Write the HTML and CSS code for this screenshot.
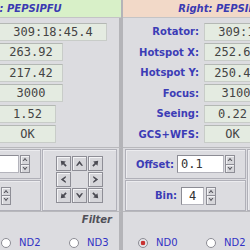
FILE: index.html
```html
<!DOCTYPE html>
<html lang="en">
<head>
    <meta charset="UTF-8">
    <meta name="viewport" content="width=device-width, initial-scale=1.0">
    <title>PEPSIPFU Guider</title>
    <link rel="stylesheet" href="styles.css">
</head>
<body>
    <svg class="defs" width="0" height="0" aria-hidden="true">
        <symbol id="chev" viewBox="0 0 10 10"><path d="M5 2L9 7.5H7L5 5L3 7.5H1Z"/></symbol>
        <symbol id="diag" viewBox="0 0 10 10"><path d="M2 2L7.6 2.8L5.9 4.5L8.6 7.2L7.2 8.6L4.5 5.9L2.8 7.6Z"/></symbol>
        <symbol id="tri" viewBox="0 0 8 6"><path d="M4 0.8L7.2 5H5.6L4 2.9L2.4 5H0.8Z"/></symbol>
    </svg>

    <div class="app">
        <!-- left guider -->
        <section class="panel">
            <h2 class="title green">Left: PEPSIPFU</h2>
            <div class="body">
                <div class="fields">
                    <span class="lbl">Rotator:</span><span class="val w-long">309:18:45.4</span>
                    <span class="lbl">Hotspot X:</span><span class="val w-mid">263.92</span>
                    <span class="lbl">Hotspot Y:</span><span class="val w-mid">217.42</span>
                    <span class="lbl">Focus:</span><span class="val w-mid">3000</span>
                    <span class="lbl">Seeing:</span><span class="val w-short">1.52</span>
                    <span class="lbl">GCS+WFS:</span><span class="val w-short">OK</span>
                </div>
                <div class="controls">
                    <div class="stack">
                        <div class="frame">
                            <div class="spin">
                                <span class="lbl">Offset:</span>
                                <span class="entry offset">0.1</span>
                                <span class="spin-btns">
                                    <span class="sb"><svg><use href="#tri"/></svg></span>
                                    <span class="sb down"><svg><use href="#tri"/></svg></span>
                                </span>
                            </div>
                        </div>
                        <div class="frame">
                            <div class="spin bin">
                                <span class="lbl">Bin:</span>
                                <span class="entry small">4</span>
                                <span class="spin-btns">
                                    <span class="sb"><svg><use href="#tri"/></svg></span>
                                    <span class="sb down"><svg><use href="#tri"/></svg></span>
                                </span>
                            </div>
                        </div>
                    </div>
                    <div class="frame pad-frame">
                        <div class="pad">
                            <span class="pbtn"><svg><use href="#diag"/></svg></span>
                            <span class="pbtn"><svg><use href="#chev"/></svg></span>
                            <span class="pbtn r90"><svg><use href="#diag"/></svg></span>
                            <span class="pbtn r270"><svg><use href="#chev"/></svg></span>
                            <span class="pad-gap"></span>
                            <span class="pbtn r90"><svg><use href="#chev"/></svg></span>
                            <span class="pbtn r270"><svg><use href="#diag"/></svg></span>
                            <span class="pbtn r180"><svg><use href="#chev"/></svg></span>
                            <span class="pbtn r180"><svg><use href="#diag"/></svg></span>
                        </div>
                    </div>
                </div>
                <div class="filter">
                    <div class="filter-title">Filter</div>
                    <div class="radios">
                        <label class="radio"><span class="dot"></span>ND0</label>
                        <label class="radio"><span class="dot"></span>ND2</label>
                        <label class="radio"><span class="dot"></span>ND3</label>
                    </div>
                </div>
            </div>
        </section>

        <div class="divider"></div>

        <!-- right guider -->
        <section class="panel">
            <h2 class="title peach">Right: PEPSIPFU</h2>
            <div class="body">
                <div class="fields">
                    <span class="lbl">Rotator:</span><span class="val w-long">309:18:45.4</span>
                    <span class="lbl">Hotspot X:</span><span class="val w-mid">252.63</span>
                    <span class="lbl">Hotspot Y:</span><span class="val w-mid">250.41</span>
                    <span class="lbl">Focus:</span><span class="val w-mid">3100</span>
                    <span class="lbl">Seeing:</span><span class="val w-short">0.22</span>
                    <span class="lbl">GCS+WFS:</span><span class="val w-short">OK</span>
                </div>
                <div class="controls">
                    <div class="stack">
                        <div class="frame">
                            <div class="spin">
                                <span class="lbl">Offset:</span>
                                <span class="entry offset">0.1</span>
                                <span class="spin-btns">
                                    <span class="sb"><svg><use href="#tri"/></svg></span>
                                    <span class="sb down"><svg><use href="#tri"/></svg></span>
                                </span>
                            </div>
                        </div>
                        <div class="frame">
                            <div class="spin bin">
                                <span class="lbl">Bin:</span>
                                <span class="entry small">4</span>
                                <span class="spin-btns">
                                    <span class="sb"><svg><use href="#tri"/></svg></span>
                                    <span class="sb down"><svg><use href="#tri"/></svg></span>
                                </span>
                            </div>
                        </div>
                    </div>
                    <div class="frame pad-frame">
                        <div class="pad">
                            <span class="pbtn"><svg><use href="#diag"/></svg></span>
                            <span class="pbtn"><svg><use href="#chev"/></svg></span>
                            <span class="pbtn r90"><svg><use href="#diag"/></svg></span>
                            <span class="pbtn r270"><svg><use href="#chev"/></svg></span>
                            <span class="pad-gap"></span>
                            <span class="pbtn r90"><svg><use href="#chev"/></svg></span>
                            <span class="pbtn r270"><svg><use href="#diag"/></svg></span>
                            <span class="pbtn r180"><svg><use href="#chev"/></svg></span>
                            <span class="pbtn r180"><svg><use href="#diag"/></svg></span>
                        </div>
                    </div>
                </div>
                <div class="filter">
                    <div class="filter-title">Filter</div>
                    <div class="radios">
                        <label class="radio"><span class="dot on"></span>ND0</label>
                        <label class="radio"><span class="dot"></span>ND2</label>
                        <label class="radio"><span class="dot"></span>ND3</label>
                    </div>
                </div>
            </div>
        </section>
    </div>
</body>
</html>
```

FILE: styles.css
```css
* { box-sizing: border-box; }
body { margin: 0; width: 250px; height: 250px; overflow: hidden; background: #dcdce0; font-family: "DejaVu Sans", sans-serif; font-size: 10px; }
.defs { position: absolute; width: 0; height: 0; }

/* the screenshot is a crop of a wider window */
.app { display: grid; grid-template-columns: 203px 2px 203px; width: 408px; height: 250px; margin-left: -82px; }
.divider { background: #b4b4b8; }
.panel { display: flex; flex-direction: column; }

.title { margin: 0; height: 18px; display: flex; align-items: center; justify-content: center; font-size: 10px; font-weight: bold; font-style: italic; color: #3a3ab2; white-space: nowrap; border-bottom: 1px solid #c4c4c6; }
.title.green { background: #d8f0c8; }
.title.peach { background: #f2d9c8; }

.body { flex: 1; box-shadow: inset -2px 0 #b4b4b8; }

.fields { display: grid; grid-template-columns: 76px 1fr; column-gap: 5px; row-gap: 2.6px; padding-top: 4.5px; }
.lbl { font-weight: bold; color: #3c3cb6; text-align: right; align-self: center; white-space: nowrap; }
.val { justify-self: start; height: 18px; display: flex; align-items: center; justify-content: center; background: #e4ebe1; border: 1px solid #c8ccc8; border-top-color: #b4b8b4; font-family: "DejaVu Sans Mono", monospace; font-size: 12px; color: #444; white-space: nowrap; }
.w-long { width: 108px; }
.w-mid { width: 64px; }
.w-short { width: 57px; }

.controls { display: flex; gap: 1px; margin-top: 3.5px; padding: 1px 0 0 2px; border-top: 1px solid #b8b8bc; height: 64px; }
.stack { width: 121px; display: flex; flex-direction: column; gap: 1px; }
.frame { flex: 1; display: flex; align-items: center; justify-content: center; border: 1px solid #b0b0b8; box-shadow: inset 1px 1px #ececef; }
.pad-frame { flex: none; width: 75px; height: 62px; }

.spin { display: flex; align-items: center; gap: 3px; }
.spin.bin { gap: 4px; }
.spin .lbl { margin-right: 0; }
.entry { height: 18px; display: flex; align-items: center; background: #fff; border: 1px solid #b4b4bc; border-top-color: #8c8c94; border-left-color: #8c8c94; font-family: "DejaVu Sans Mono", monospace; font-size: 12px; color: #333; }
.entry.offset { width: 47px; padding-left: 3px; }
.entry.small { width: 23px; justify-content: center; }
.spin-btns { display: flex; flex-direction: column; width: 10px; height: 18px; margin-left: -2px; }
.spin.bin .spin-btns { margin-left: -2px; }
.sb { flex: 1; display: flex; align-items: center; justify-content: center; background: #d6d6da; border: 1px solid #8e8e96; box-shadow: inset 1px 1px #f2f2f4; }
.sb + .sb { border-top: none; }
.sb svg { width: 6px; height: 5px; fill: #55555c; }
.sb.down svg { transform: rotate(180deg); }

.pad { display: grid; grid-template-columns: repeat(3, 15px); grid-auto-rows: 15px; gap: 1px; }
.pbtn { display: flex; align-items: center; justify-content: center; background: #d6d6da; border: 1px solid #8e8e96; box-shadow: inset 1px 1px #f4f4f6; }
.pbtn svg { width: 9px; height: 9px; fill: #4c4c54; }
.r90 svg { transform: rotate(90deg); }
.r180 svg { transform: rotate(180deg); }
.r270 svg { transform: rotate(270deg); }

.filter { border-top: 1px solid #b8b8bc; }
.filter-title { padding: 2px 9px 0 0; height: 14px; line-height: 12px; text-align: right; font-weight: bold; font-style: italic; color: #505058; }
.radios { display: grid; grid-template-columns: repeat(3, 68px); padding-left: 15px; margin-top: 11px; }
.radio { display: flex; align-items: center; gap: 8px; height: 12px; color: #3232c4; white-space: nowrap; }
.dot { width: 10px; height: 10px; border-radius: 50%; border: 1px solid #8c8c94; background: #fff; }
.dot.on { background: radial-gradient(circle, #c83232 0 2px, #e4e4e8 2.6px); }
```
